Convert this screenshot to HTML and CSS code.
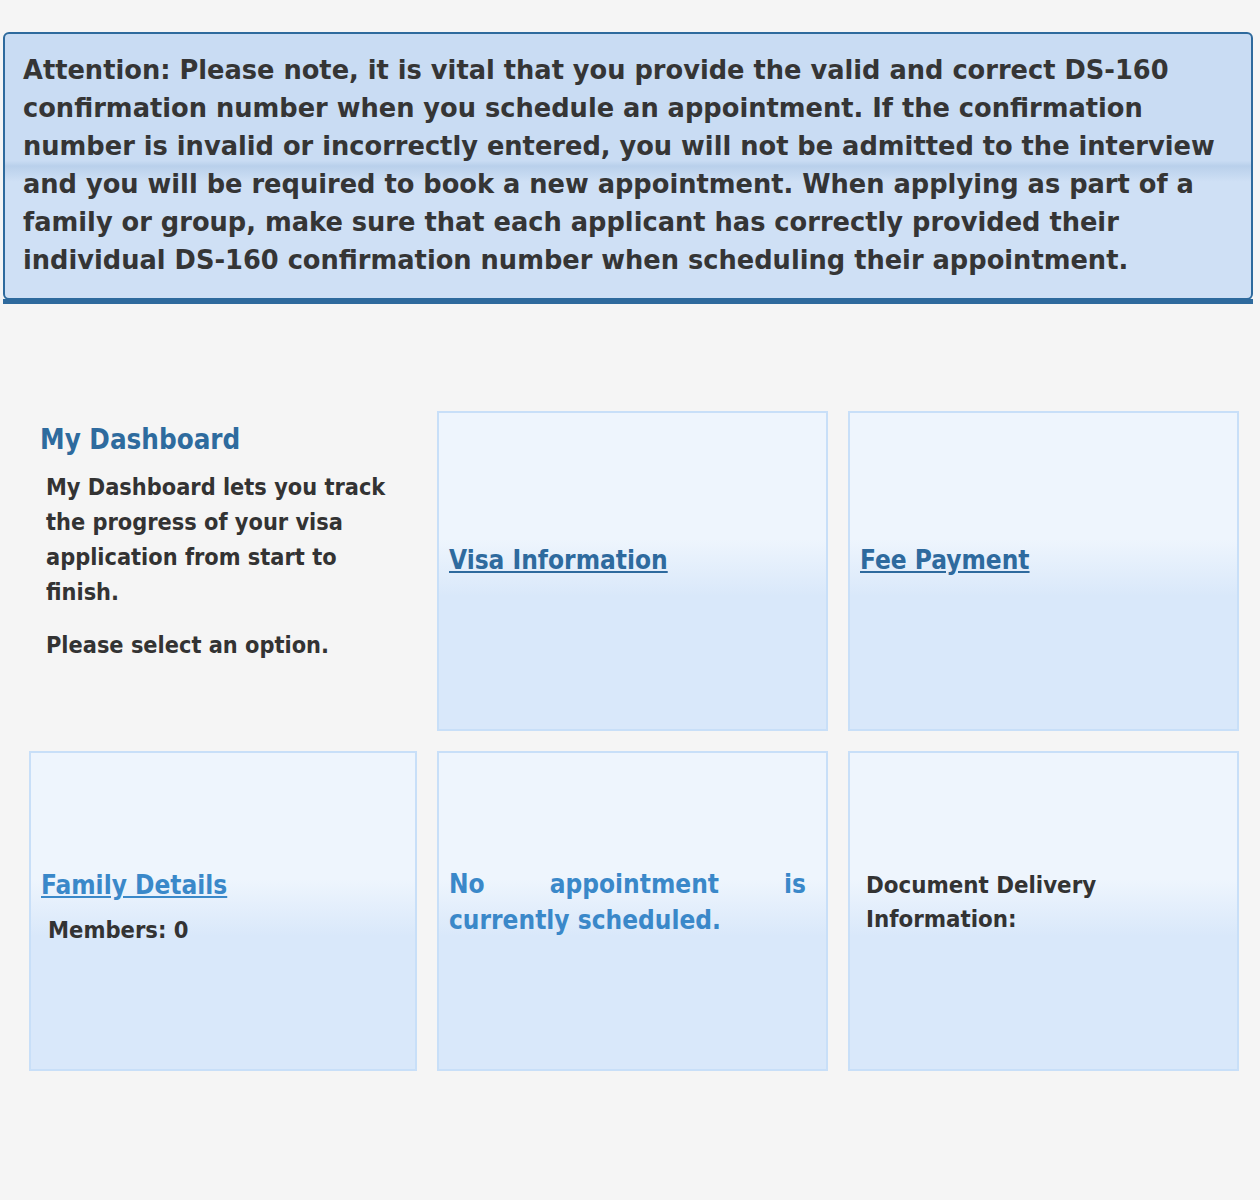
FILE: index.html
```html
<!DOCTYPE html>
<html lang="en">
<head>
  <meta charset="UTF-8" />
  <meta name="viewport" content="width=device-width, initial-scale=1.0"/>
  <title>My Dashboard</title>
  <link rel="stylesheet" href="styles.css">
</head>
<body>
  <div class="notice-wrap">
    <div class="notice">
      Attention: Please note, it is vital that you provide the valid and correct DS-160 confirmation number when you schedule an appointment. If the confirmation number is invalid or incorrectly entered, you will not be admitted to the interview and you will be required to book a new appointment. When applying as part of a family or group, make sure that each applicant has correctly provided their individual DS-160 confirmation number when scheduling their appointment.
    </div>
  </div>

  <div class="dashboard">
    <div class="intro">
      <h2>My Dashboard</h2>
      <p>My Dashboard lets you track the progress of your visa application from start to finish.</p>
      <p class="select">Please select an option.</p>
    </div>

    <div class="tile">
      <a href="#" class="tile-link">Visa Information</a>
    </div>

    <div class="tile">
      <a href="#" class="tile-link">Fee Payment</a>
    </div>

    <div class="tile tile-family">
      <a href="#" class="tile-link light">Family Details</a>
      <p class="members">Members: 0</p>
    </div>

    <div class="tile tile-appt">
      <p class="appt">No appointment is currently scheduled.</p>
    </div>

    <div class="tile tile-docs">
      <p class="docs">Document Delivery Information:</p>
    </div>
  </div>
</body>
</html>
```

FILE: styles.css
```css
body {
  margin: 0;
  background: #f5f5f5;
  color: #333;
  font-family: "DejaVu Sans Condensed", "DejaVu Sans", sans-serif;
  font-weight: bold;
}
.notice-wrap {
  margin: 32px 7px 0 3px;
  border-bottom: 5px solid #2e6a9d;
}
.notice {
  border: 2px solid #2e6a9d;
  border-radius: 6px;
  background: linear-gradient(to bottom, #c9dcf3 0%, #c9dcf3 48%, #b9d0eb 50%, #cfe0f5 56%, #cfe0f5 100%);
  padding: 17px 18px 19px 18px;
  font-family: "DejaVu Sans", Verdana, sans-serif;
  font-size: 25.7px;
  line-height: 38px;
  color: #353535;
  margin-bottom: -1px;
}
.dashboard {
  display: grid;
  grid-template-columns: 388px 391px 391px;
  grid-auto-rows: 320px;
  gap: 20px;
  margin: 107px 0 0 29px;
}
.intro {
  padding: 11px 20px 0 11px;
}
.intro h2 {
  margin: 0 0 13px 0;
  color: #2e6b9e;
  font-size: 27.5px;
  line-height: 34px;
}
.intro p {
  margin: 0 0 0 6px;
  font-size: 23.3px;
  line-height: 35px;
}
.intro .select {
  margin-top: 18px;
}
.tile {
  border: 2px solid #c8dff8;
  background: linear-gradient(to bottom, #eef5fd 0%, #eef5fd 40%, #d9e8fa 58%, #d9e8fa 100%);
  display: flex;
  flex-direction: column;
  justify-content: center;
  padding: 0 20px 22px 10px;
}
.tile-link {
  color: #2e6a9e;
  font-size: 26px;
  line-height: 36px;
  text-decoration: underline;
  align-self: flex-start;
}
.tile-link.light {
  color: #3a88c9;
}
.tile-family {
  padding-bottom: 8px;
}
.members {
  margin: 9px 0 0 7px;
  font-size: 23.5px;
  line-height: 36px;
}
.tile-appt, .tile-docs {
  padding-bottom: 18px;
}
.appt {
  margin: 0;
  color: #3a88c9;
  font-size: 26px;
  line-height: 36px;
  text-align: justify;
}
.docs {
  margin: 0 0 0 6px;
  font-size: 23.8px;
  line-height: 34px;
  width: 260px;
}
```
